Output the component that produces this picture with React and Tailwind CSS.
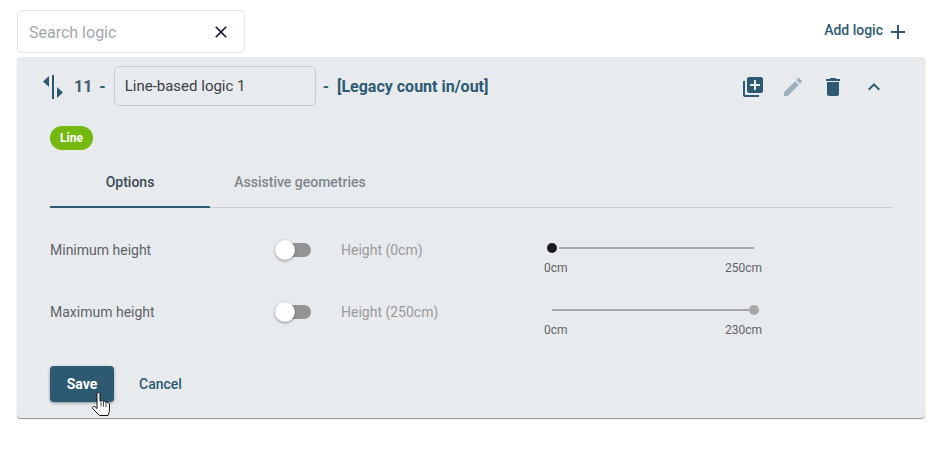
const Toggle = () => (
  <div className="relative w-[36px] h-[20px] flex items-center justify-end">
    <div className="w-[32px] h-[14px] rounded-full bg-[#949494]"></div>
    <div className="absolute left-0 top-0 w-[20px] h-[20px] rounded-full bg-white shadow-[0_1px_3px_rgba(0,0,0,0.4)]"></div>
  </div>
);

const HeightRow = ({ title, label, max, dark }) => (
  <div className="flex items-start h-[62px]">
    <div className="w-[225px] text-[14px] leading-[20px] text-[#5f6368] pt-[7px]">{title}</div>
    <div className="w-[66px] pt-[7px]">
      <Toggle />
    </div>
    <div className="w-[203px] text-[14px] leading-[20px] text-[#9a9a9a] pt-[7px]">{label}</div>
    <div className="w-[218px] pt-[8px]">
      {dark ? (
        <div className="flex items-center h-[14px] pl-[3px] pr-[8px]">
          <div className="w-[10px] h-[10px] rounded-full bg-[#1c1c1c] mr-[2px] shrink-0"></div>
          <div className="grow h-[2px] bg-[#a8a8a8]"></div>
        </div>
      ) : (
        <div className="flex items-center h-[14px] pl-[8px] pr-[3px]">
          <div className="grow h-[2px] bg-[#a8a8a8]"></div>
          <div className="w-[10px] h-[10px] rounded-full bg-[#a8a8a8] shrink-0"></div>
        </div>
      )}
      <div className="flex justify-between text-[12px] leading-[16px] text-[#5f6368] mt-[5px]">
        <span>0cm</span>
        <span>{max}</span>
      </div>
    </div>
  </div>
);

export default function App() {
  return (
    <div className="w-[943px] h-[457px] bg-white font-['Roboto',sans-serif] pl-[17px] pr-[18px] pt-[10px]">
      {/* Top bar */}
      <div className="flex justify-between items-start h-[47px]">
        <div className="w-[228px] h-[43px] rounded-[5px] border border-[#dfe1e5] bg-white flex items-center justify-between pl-[11px] pr-[13px]">
          <span className="text-[16px] text-[#a3a7ad] mt-[2px]">Search logic</span>
          <svg width="20" height="20" viewBox="0 0 24 24" fill="#14233c">
            <path d="M19 6.41 17.59 5 12 10.59 6.41 5 5 6.41 10.59 12 5 17.59 6.41 19 12 13.41 17.59 19 19 17.59 13.41 12z" />
          </svg>
        </div>
        <div className="flex items-center gap-[3px] pt-[10px] pr-[15px] text-[#2d5a72]">
          <span className="text-[14px] font-medium leading-[24px] -mt-[5px]">Add logic</span>
          <svg width="24" height="24" viewBox="0 0 24 24" fill="currentColor">
            <path d="M19 13h-6v6h-2v-6H5v-2h6V5h2v6h6z" />
          </svg>
        </div>
      </div>

      {/* Card */}
      <div className="h-[361px] rounded-[4px] bg-[#e8ebee] shadow-[0_1px_1px_rgba(0,0,0,0.45)] pl-[33px] pr-[32px]">
        <div className="flex items-center h-[58px] pt-[1px] text-[#2d5a72] -mb-[1px]">
          <svg width="24" height="26" viewBox="0 0 24 26" fill="#2d5a72" className="ml-[-8px] mr-[8px]">
            <path d="M10 1h2v24h-2z" />
            <path d="M7 2v11L1 7.500z" />
            <path d="M15 13v11l6-5.500z" />
          </svg>
          <span className="text-[16px] font-bold text-[#3f5b6d]">11</span>
          <span className="text-[16px] font-bold ml-[7px]">-</span>
          <div className="ml-[8px] -mt-[2px] w-[202px] h-[40px] rounded-[5px] border border-[#c9ced3] flex items-center pl-[10px] pt-[2px] text-[15px] text-[#3c4043]">
            Line-based logic 1
          </div>
          <span className="text-[16px] font-bold ml-[7px]">-</span>
          <span className="text-[16px] font-bold ml-[8px]">[Legacy count in/out]</span>
          <div className="ml-auto flex items-center pr-[7px]">
            <svg width="24" height="24" viewBox="0 0 24 24" fill="#2d5a72">
              <path d="M4 6H2v14c0 1.100.9 2 2 2h14v-2H4V6zm16-4H8c-1.100 0-2 .9-2 2v12c0 1.100.9 2 2 2h12c1.100 0 2-.9 2-2V4c0-1.100-.9-2-2-2zm-1 9h-4v4h-2v-4H9V9h4V5h2v4h4v2z" />
            </svg>
            <svg width="24" height="24" viewBox="0 0 24 24" fill="#9bb0bd" className="ml-[16px]">
              <path d="M3 17.250V21h3.750L17.810 9.940l-3.750-3.750L3 17.250zM20.710 7.040a1 1 0 0 0 0-1.410l-2.340-2.340a1 1 0 0 0-1.410 0l-1.830 1.830 3.750 3.750 1.830-1.830z" />
            </svg>
            <svg width="24" height="24" viewBox="0 0 24 24" fill="#2d5a72" className="ml-[16px]">
              <path d="M6 19c0 1.100.9 2 2 2h8c1.100 0 2-.9 2-2V7H6v12zM19 4h-3.500l-1-1h-5l-1 1H5v2h14V4z" />
            </svg>
            <svg width="24" height="24" viewBox="0 0 24 24" fill="#2d5a72" className="ml-[17px]">
              <path d="M12 8l-6 6 1.410 1.410L12 10.830l4.590 4.580L18 14z" />
            </svg>
          </div>
        </div>

        <div className="mt-[12px] w-[43px] h-[24px] rounded-full bg-[#74b90f] text-white text-[12px] font-bold flex items-center justify-center">
          Line
        </div>

        {/* Tabs */}
        <div className="flex mt-[8px] h-[50px] border-b border-[#c9ced3] text-[14px] font-medium">
          <div className="w-[160px] h-[50px] border-b-2 border-[#2d5a72] text-[#3c4a54] flex items-center justify-center">
            Options
          </div>
          <div className="w-[180px] h-[50px] pb-[2px] text-[#80868b] flex items-center justify-center">
            Assistive geometries
          </div>
        </div>

        <div className="mt-[25px]">
          <HeightRow title="Minimum height" label="Height (0cm)" max="250cm" dark />
          <HeightRow title="Maximum height" label="Height (250cm)" max="230cm" />
        </div>

        <div className="flex items-center mt-[9px]">
          <button className="w-[64px] h-[36px] rounded-[4px] bg-[#2d5a72] text-white text-[14px] font-bold shadow-[0_1px_3px_rgba(0,0,0,0.4)]">
            Save
          </button>
          <span className="ml-[25px] text-[14px] font-medium text-[#2d5a72]">Cancel</span>
        </div>
      </div>

      {/* Mouse pointer over the save button */}
      <svg width="19" height="25" viewBox="0 0 19 25" className="absolute left-[92px] top-[392px]" fill="white" stroke="#111" strokeWidth="1">
        <path d="M6.500.5c1 0 1.500.8 1.500 1.700V9l1-.2c1-.5 2-.2 2.300.7 1-.5 2-.2 2.400.7 1-.5 2-.1 2.200 1 .7-.3 1.600 0 1.600 1v5.300c0 2.500-.8 4-1.500 6H7.500L1 17c-.9-1.200-.4-2.300.5-2.500.8-.2 2 .3 3.500 2V2.200c0-.9.500-1.700 1.500-1.700z" />
        <path d="M9 9.500v5M11.500 9.700v5M14 10.500v4.500" fill="none" strokeWidth="0.800" />
      </svg>
    </div>
  );
}
